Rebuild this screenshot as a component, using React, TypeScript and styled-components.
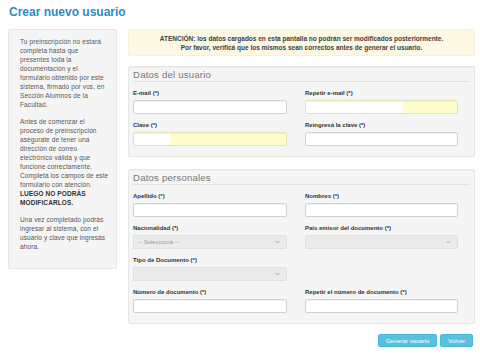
import styled, { createGlobalStyle } from 'styled-components'

const GlobalStyle = createGlobalStyle`
  html, body {
    margin: 0;
    padding: 0;
    background: #fff;
  }
  body {
    font-family: 'Liberation Sans', Arial, sans-serif;
    color: #333;
  }
  * {
    box-sizing: border-box;
  }
`

type FieldProps = {
  label: string
  kind?: 'input' | 'select'
  placeholder?: string
  autofillFrom?: number
}

function Field({ label, kind = 'input', placeholder, autofillFrom }: FieldProps) {
  return (
    <StyledField>
      <FieldLabel>{label}</FieldLabel>
      {kind === 'select' ? (
        <FakeSelect>
          <span>{placeholder}</span>
          <svg width='5' height='4' viewBox='0 0 5 4' aria-hidden='true'>
            <path d='M0.6 1 L2.5 3 L4.4 1' fill='none' stroke='#999' strokeWidth='0.8' />
          </svg>
        </FakeSelect>
      ) : (
        <TextInput
          $autofill={autofillFrom !== undefined}
          style={
            autofillFrom !== undefined
              ? {
                  background: `linear-gradient(to right, #fff 0, #fff ${autofillFrom}px, #fffccc ${autofillFrom}px)`,
                }
              : undefined
          }
        />
      )}
    </StyledField>
  )
}

// line breaks follow the original column wrapping
const sidebarText = [
  [
    'Tu preinscripción no estará',
    'completa hasta que',
    'presentes toda la',
    'documentación y el',
    'formulario obtenido por este',
    'sistema, firmado por vos, en',
    'Sección Alumnos de la',
    'Facultad.',
  ],
  [
    'Antes de comenzar el',
    'proceso de preinscripción',
    'asegurate de tener una',
    'dirección de correo',
    'electrónico válida y que',
    'funcione correctamente.',
    'Completá los campos de este',
    'formulario con atención.',
  ],
  [
    'Una vez completado podrás',
    'ingresar al sistema, con el',
    'usuario y clave que ingresás',
    'ahora.',
  ],
]

function Lines({ lines }: { lines: string[] }) {
  return (
    <>
      {lines.map((line, i) => (
        <span key={line}>
          {i > 0 && <br />}
          {line}
        </span>
      ))}
    </>
  )
}

export default function App() {
  return (
    <>
      <GlobalStyle />
      <Page>
        <Title>Crear nuevo usuario</Title>
        <Columns>
          <Sidebar>
            <p>
              <Lines lines={sidebarText[0]} />
            </p>
            <p>
              <Lines lines={sidebarText[1]} />
              <br />
              <strong>
                LUEGO NO PODRÁS
                <br />
                MODIFICARLOS.
              </strong>
            </p>
            <p>
              <Lines lines={sidebarText[2]} />
            </p>
          </Sidebar>
          <Main>
            <Alert>
              ATENCIÓN: los datos cargados en esta pantalla no podrán ser
              modificados posteriormente.
              <br />
              Por favor, verificá que los mismos sean correctos antes de generar
              el usuario.
            </Alert>
            <Panel>
              <Legend>Datos del usuario</Legend>
              <FieldGrid>
                <Field label='E-mail (*)' />
                <Field label='Repetir e-mail (*)' autofillFrom={97} />
                <Field label='Clave (*)' autofillFrom={36} />
                <Field label='Reingresá la clave (*)' />
              </FieldGrid>
            </Panel>
            <Panel $gap>
              <Legend>Datos personales</Legend>
              <FieldGrid>
                <Field label='Apellido (*)' />
                <Field label='Nombres (*)' />
                <Field label='Nacionalidad (*)' kind='select' placeholder='-- Seleccioná --' />
                <Field label='País emisor del documento (*)' kind='select' />
                <Field label='Tipo de Documento (*)' kind='select' />
                <div />
                <Field label='Número de documento (*)' />
                <Field label='Repetir el número de documento (*)' />
              </FieldGrid>
            </Panel>
            <Actions>
              <InfoButton>Generar usuario</InfoButton>
              <InfoButton>Volver</InfoButton>
            </Actions>
          </Main>
        </Columns>
      </Page>
    </>
  )
}

const Page = styled.div`
  padding: 5px 5px 0 8px;
`

const Title = styled.h1`
  margin: 0 0 10px 1px;
  font-size: 12px;
  line-height: 14px;
  font-weight: 700;
  color: #2a8cc4;
`

const Columns = styled.div`
  display: flex;
  align-items: flex-start;
  gap: 11px;
`

const Sidebar = styled.aside`
  width: 109px;
  flex: none;
  padding: 7px 6px 9px 11px;
  background: #f5f5f5;
  border: 1px solid #e6e6e6;
  border-radius: 2px;
  font-size: 6.5px;
  line-height: 9px;
  letter-spacing: 0.1px;
  white-space: nowrap;
  color: #555;

  p {
    margin: 0 0 8px;
  }

  strong {
    color: #333;
  }
`

const Main = styled.main`
  width: 347px;
  flex: none;
`

const Alert = styled.div`
  padding: 3.5px 8px;
  background: #fcf8e3;
  border: 1px solid #f8f1d8;
  border-radius: 2px;
  text-align: center;
  font-size: 6.5px;
  line-height: 9px;
  font-weight: 700;
  color: #3f3f3f;
`

const Panel = styled.section<{ $gap?: boolean }>`
  margin-top: ${({ $gap }) => ($gap ? '12px' : '10px')};
  padding: 2px 4px 3.5px 4px;
  background: #f5f5f5;
  border: 1px solid #e6e6e6;
  border-radius: 2px;
  box-shadow: inset 0 1px 1px rgba(0, 0, 0, 0.03);
`

const Legend = styled.div`
  margin-bottom: 6.5px;
  font-size: 9.6px;
  line-height: 12px;
  letter-spacing: 0.2px;
  color: #777;
  border-bottom: 1px solid #e2e2e2;
`

const FieldGrid = styled.div`
  display: grid;
  grid-template-columns: 154px 153px;
  column-gap: 18px;
`

const StyledField = styled.div`
  margin-bottom: 6.5px;
`

const FieldLabel = styled.label`
  display: block;
  margin-bottom: 2.5px;
  font-size: 6px;
  line-height: 9px;
  font-weight: 700;
  color: #333;
`

const TextInput = styled.div<{ $autofill: boolean }>`
  height: 14px;
  background: #fff;
  border: 1px solid ${({ $autofill }) => ($autofill ? '#e6e2b8' : '#d2d2d2')};
  border-radius: 2px;
  box-shadow: inset 0 1px 1px rgba(0, 0, 0, 0.05);
`

const FakeSelect = styled.div`
  height: 14px;
  display: flex;
  align-items: center;
  justify-content: space-between;
  padding: 0 6px 0 4px;
  background: #ebebeb;
  border: 1px solid #e0e0e0;
  border-radius: 2px;
  font-size: 6px;
  color: #999;
`

const Actions = styled.div`
  display: flex;
  justify-content: flex-end;
  gap: 3px;
  margin: 10px 2px 0 0;
`

const InfoButton = styled.button`
  height: 13px;
  padding: 0 7px;
  font-family: 'Liberation Sans', Arial, sans-serif;
  font-size: 6px;
  color: #fff;
  background: #5bc0de;
  border: 1px solid #46b8da;
  border-radius: 2px;
`
